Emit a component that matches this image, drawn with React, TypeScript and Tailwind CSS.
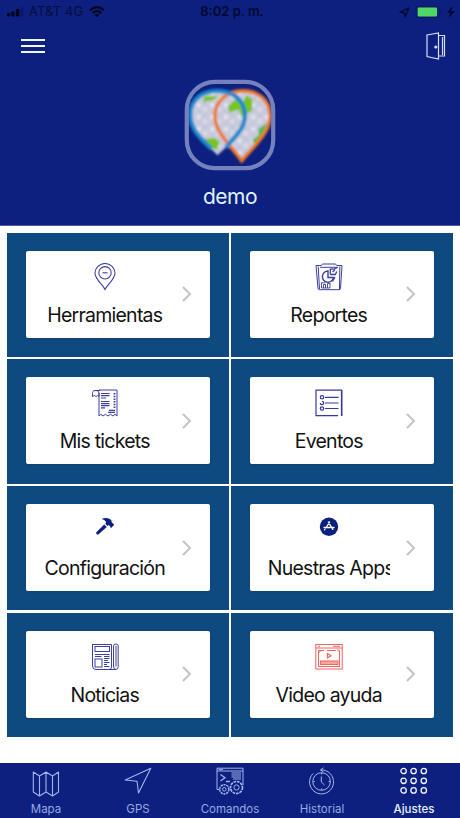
import type { ReactNode } from "react"
import clsx from "clsx"

const PinIcon = () => (
  <svg width="28" height="28" viewBox="0 0 28 28" fill="none" stroke="#3b3f9e" strokeWidth="1.1">
    <path d="M14 26.5 C11.5 21 4 16.5 4 10 A10 9.5 0 0 1 24 10 C24 16.5 16.5 21 14 26.5 Z" />
    <circle cx="14" cy="9.8" r="6.2" />
    <path d="M11.5 9.8h5" />
  </svg>
)

const ReportIcon = () => (
  <svg width="28" height="28" viewBox="0 0 28 28" fill="none" stroke="#3b3f9e" strokeWidth="1">
    <path d="M1 2.5 L3 25.5 Q3.2 26.7 4.5 26.7 H24 Q25.4 26.7 25.5 25.5 L27 2.5" />
    <path d="M1 2.5 H6 M22 2.5 H27 M3.2 3.5 L4.5 26 M24.8 3.5 L24.5 26 M6 2.8 L7.5 1 H20.5 L22 2.8 M5 4.3 H23" />
    <path d="M13 8 A5.6 5.6 0 1 0 18.5 14.5 H13 Z" strokeWidth="1.4" />
    <path d="M15.3 11.5 V6.2 H19 L22.5 4.5 M15.3 11.5 H20.3 L21.8 8.5 M17.5 9 L20 7 M20 14 L17.5 18.5" strokeWidth="1.3" />
    <path d="M6.5 20 V25 H15 V20 M8.5 25 V21.5 H10.5 V25 M12.5 25 V20.5 H15 M6 19.8 H10.5" strokeWidth="0.9" />
  </svg>
)

const TicketIcon = () => (
  <svg width="28" height="28" viewBox="0 0 28 28" fill="none" stroke="#3b3f9e" strokeWidth="1">
    <path d="M8 1 H26 V27 L24 25.3 L22 27 L19.5 25.3 L17 27 L14.5 25.3 L12 27 L9.8 25.3 L8 27 V4" />
    <path d="M9 1.5 H4 C2 1.5 1.5 3 1.5 4.5 V7.5 L3.5 6.5 L5 7.5 L6.5 6.5 L8 7.5 V4 C8 2 6 1.5 4 1.5" />
    <path d="M10 4.5 H18.5 M10 6.7 H18.5 M10 9 H15 M10 12.5 H18.5 M10 14.6 H18.5 M10 16.7 H18.5 M10 18.8 H14 M18 21.3 H24 M17 23.3 H24" strokeWidth="1.2" />
    <path d="M23.5 4 V19" strokeWidth="1.8" strokeDasharray="1.5 1.2" />
  </svg>
)

const EventIcon = () => (
  <svg width="28" height="28" viewBox="0 0 28 28" fill="none" stroke="#3539a0" strokeWidth="1.2">
    <path d="M23 26.6 H1 V1.2 H27" />
    <path d="M26.7 1 V27" strokeWidth="1.6" />
    <path d="M10 8.3 H23.5 M10 14 H23.5 M10 19.5 H23.5" />
    <circle cx="7" cy="8.3" r="1.7" />
    <path d="M7 12.3 A1.7 1.7 0 1 1 5.3 14" />
    <circle cx="7" cy="19.5" r="1.7" />
  </svg>
)

const HammerIcon = () => (
  <svg width="28" height="28" viewBox="0 0 28 28" fill="#0c2080">
    <g transform="translate(0 1.7)">
      <path d="M10.5 1.2 C14 -0.4 18 0 20.2 2.4 L20.8 4.6 L22 6 L22.6 5.8 L23 7.2 L20.4 10 L19.2 9.8 L19.2 8.6 L17.6 7.4 L16.6 8.2 L14.2 6 L15.2 4.8 C14.6 2.8 13 1.6 10.5 1.2 Z" />
      <path d="M13.2 6.8 L15.8 9.2 L7.6 16.6 C6.4 17.6 4.4 15.8 5.4 14.5 Z" />
    </g>
  </svg>
)

const AppStoreIcon = () => (
  <svg width="28" height="28" viewBox="0 0 28 28" fill="none" stroke="#fff" strokeWidth="1.3" strokeLinecap="round">
    <circle cx="14" cy="10.8" r="9.2" fill="#0c2080" stroke="none" />
    <path d="M13.3 6 L17.8 13.4 M14.7 6 L10.8 12 M9.8 13.4 L9.5 13.8 M9 11.5 H15.2 M17.4 11.5 H19" />
  </svg>
)

const NewsIcon = () => (
  <svg width="28" height="28" viewBox="0 0 28 28" fill="none" stroke="#3b3f9e" strokeWidth="1">
    <path d="M1.5 1 V23 Q1.5 26.5 5 26.5 H24.5 Q27.2 26.5 27.2 23.5 V3 Q27 1 25 1 Q22.5 1 22.5 3 V23 Q22.5 26.5 25 26.5" />
    <path d="M1 1.5 H20.5 V24 Q20.5 26.5 18 26.5 M25 3 V23.5" />
    <rect x="4" y="3.5" width="14.5" height="5" />
    <path d="M4 11.5 H18.5 M4 13.5 H10.5 M13 13.5 H18.5 M13 15.5 H18.5 M13 17.5 H17 M13 19.5 H18.5 M13 21.5 H16 M13 23.5 H18.5" />
    <rect x="4" y="16" width="7" height="8" />
  </svg>
)

const VideoIcon = () => (
  <svg width="28" height="28" viewBox="0 0 28 28" fill="none" stroke="#f0625f" strokeWidth="1">
    <rect x="0.8" y="1.5" width="26.4" height="24.5" />
    <path d="M1 5 H27 M3 3.3 H5 M18 3.3 H25" />
    <path d="M3.5 23.5 V7.5 H9 M12 7.5 H21 M24.5 7.5 V23.5 M3.5 10 L6 7.5 M23 6 V8.5" />
    <path d="M12.5 10.5 L16 12.8 L12.5 15 Z" strokeWidth="1.2" />
    <rect x="5.5" y="18" width="17.5" height="3.5" fill="#f8a5a2" />
    <path d="M3.5 23.5 H25" />
  </svg>
)

const MapIcon = () => (
  <svg className="overflow-visible" width="28" height="28" viewBox="0 0 28 28" fill="none" stroke="#a3b4ea" strokeWidth="1.1" strokeLinejoin="round">
    <path d="M1.3 5 L7.5 9 L14 5 L20.5 9 L26.5 5 V25 L20.5 29 L14 25 L7.5 29 L1.3 25 Z M7.5 9 V29 M14 5 V25 M20.5 9 V29" />
  </svg>
)

const GpsIcon = () => (
  <svg width="28" height="28" viewBox="0 0 28 28" fill="none" stroke="#a3b4ea" strokeWidth="1.1" strokeLinejoin="round">
    <path d="M26.8 1.2 L1.2 13 L13 14.2 L14.5 26 Z" />
  </svg>
)

const CommandIcon = () => (
  <svg className="overflow-visible" width="28" height="28" viewBox="0 0 28 28" fill="none" stroke="#a3b4ea" strokeWidth="1">
    <path d="M3.5 22.5 H1 V1.2 H27 V18 M1 4 H27 M2.5 2.6 H7" />
    <path d="M4.5 7.5 L9 10.7 L4.5 14 M10 14.5 H14" strokeWidth="1.3" />
    <path d="M15.5 6 H25 M15.5 8 H25 M15.5 10 H25 M17 12 H25" />
    <circle cx="8.3" cy="22.3" r="4.6" strokeWidth="1.5" strokeDasharray="2.2 .7" />
    <circle cx="8.3" cy="22.3" r="1.8" />
    <circle cx="20.5" cy="20.5" r="6" strokeWidth="1.7" strokeDasharray="2.7 .8" />
    <circle cx="20.5" cy="20.5" r="2.6" />
  </svg>
)

const HistoryIcon = () => (
  <svg width="28" height="28" viewBox="0 0 28 28" fill="none" stroke="#a3b4ea" strokeWidth="1">
    <path d="M12.5 3 H15 A12 12 0 1 1 5 6.5 M15.5 0.8 L12.5 3 L15.5 5" />
    <circle cx="13.6" cy="14.5" r="8.8" />
    <path d="M13.3 9.5 V15 L16.5 18 M13.6 6 V7.5 M13.6 21.5 V23 M5.2 14.5 H6.7 M20.6 14.5 H22.1" />
  </svg>
)

const GridIcon = () => (
  <svg width="28" height="28" viewBox="0 0 28 28" fill="none" stroke="#f4f7ff" strokeWidth="1.3">
    {[4, 13.8, 23.4].map((cy) =>
      [3.6, 13.6, 23.8].map((cx) => <circle key={`${cx}-${cy}`} cx={cx} cy={cy} r="2.7" />)
    )}
  </svg>
)

const tiles: { label: string; icon: ReactNode }[] = [
  { label: "Herramientas", icon: <PinIcon /> },
  { label: "Reportes", icon: <ReportIcon /> },
  { label: "Mis tickets", icon: <TicketIcon /> },
  { label: "Eventos", icon: <EventIcon /> },
  { label: "Configuración", icon: <HammerIcon /> },
  { label: "Nuestras Apps", icon: <AppStoreIcon /> },
  { label: "Noticias", icon: <NewsIcon /> },
  { label: "Video ayuda", icon: <VideoIcon /> },
]

const tabs: { label: string; icon: ReactNode; active?: boolean }[] = [
  { label: "Mapa", icon: <MapIcon /> },
  { label: "GPS", icon: <GpsIcon /> },
  { label: "Comandos", icon: <CommandIcon /> },
  { label: "Historial", icon: <HistoryIcon /> },
  { label: "Ajustes", icon: <GridIcon />, active: true },
]

function StatusBar() {
  return (
    <div className="grid h-6 grid-cols-3 items-center px-[7px] text-[13px] text-[#060d3c]">
      <div className="flex items-center">
        <svg className="shrink-0" width="17" height="10" viewBox="0 0 17 10" fill="#02061f">
          <rect x="0" y="6" width="3.2" height="3.5" rx=".7" />
          <rect x="4.3" y="4.5" width="3.2" height="5" rx=".7" />
          <rect x="8.8" y="2" width="3.6" height="7.5" rx=".7" />
          <rect x="13.5" y="0" width="3" height="9.5" rx=".7" fill="#0b1a66" />
        </svg>
        <span className="ml-[5px] whitespace-nowrap tracking-[0.1px]">AT&amp;T 4G</span>
        <svg className="ml-1.5 shrink-0" width="16" height="12" viewBox="0 0 16 12" fill="none" stroke="#02061f" strokeWidth="2.1">
          <path d="M1 4.2 Q8 -2 15 4.2 M3.6 7 Q8 3.2 12.4 7" />
          <path d="M5.6 8.7 Q8 7 10.4 8.7 L8 11.2 Z" fill="#02061f" stroke="none" />
        </svg>
      </div>
      <span className="pl-1 text-center font-semibold text-[#03092c]">8:02 p. m.</span>
      <div className="-mr-[7px] flex items-center justify-end">
        <svg width="11" height="11" viewBox="0 0 11 11" fill="none" stroke="#03092c" strokeWidth="1.3" strokeLinejoin="round">
          <path d="M10 1 L1 5 L5.3 5.7 L6 10 Z" />
        </svg>
        <svg className="ml-1.5" width="27" height="12" viewBox="0 0 27 12">
          <rect x=".5" y=".5" width="23" height="11" rx="3" fill="none" stroke="#0a1c5c" />
          <rect x="1.7" y="1.5" width="19.3" height="9" rx="1" fill="#4fd964" />
          <path d="M25 4 V8" stroke="#0a1c5c" strokeWidth="1.5" />
        </svg>
        <svg className="mr-[5px] ml-1" width="8" height="12" viewBox="0 0 8 12" fill="#03092c">
          <path d="M5.5 0 L0 6.7 H3.3 L2 12 L7.8 5 H4.4 Z" />
        </svg>
      </div>
    </div>
  )
}

function Avatar() {
  return (
    <svg width="92" height="92" viewBox="0 0 92 92">
      <defs>
        <filter id="soften">
          <feGaussianBlur stdDeviation="0.9" />
        </filter>
        <pattern id="speckle" width="13" height="11" patternUnits="userSpaceOnUse">
          <rect width="13" height="11" fill="#c9cbdd" />
          <circle cx="3" cy="3" r="2" fill="#e4e5ef" />
          <circle cx="9" cy="7" r="2.2" fill="#d9dbe8" />
          <circle cx="9" cy="1.5" r="1.3" fill="#bbbed8" />
          <circle cx="3" cy="8.5" r="1.2" fill="#bec1da" />
        </pattern>
      </defs>
      <g filter="url(#soften)" transform="translate(-2.1 -1.2) scale(1.05 1.09)">
        <path d="M34 12 C19 12 8 21 8 35 C8 49 22 59 34 71 C47 59 59 49 60 35 C60 21 49 12 34 12 Z" fill="url(#speckle)" />
        <path d="M17 57 L31 55 L36 59 L33 66 L26 64 Z" fill="#78c51c" />
        <path d="M21 17 L36 17 L28 21 L20 22 Z" fill="#78c51c" />
        <path d="M58 12 C43 12 32 21 32 35 C32 51 46 62 57 77 C69 63 84 51 84 35 C84 21 73 12 58 12 Z" fill="url(#speckle)" />
        <path d="M44 26 L52 19 L58 23 L61 16 L67 19 L67 30 L57 36 L54 29 L45 32 Z" fill="#78c51c" />
        <path d="M82 41 L73 47 L73 53 L67 57 L69 61 L75 55 Z" fill="#4cb84b" />
        <path d="M57 76 C45 60 31 50 31.5 34 C32 21 43 12 58 12 C73 12 84 21 84 35 C84 50 69 62 57 76 Z" fill="none" stroke="#ee7927" strokeWidth="3.4" />
        <path d="M28 65 C17 55 8 47 8 34 C8 20 19 12 34 12 C49 12 60 21 60 35 C60 47 49 55 42 64" fill="none" stroke="#1687cd" strokeWidth="4" />
      </g>
      <rect x="2.8" y="2.8" width="86.4" height="86.4" rx="28" fill="none" stroke="#7581bd" strokeWidth="4.2" />
    </svg>
  )
}

function Header() {
  return (
    <header className="h-[226px] border-b border-[#5058a8] bg-[#0d2080]">
      <StatusBar />
      <div className="flex h-11 items-center justify-between pr-[14px] pl-[21px]">
        <button aria-label="Menú" className="flex w-6 flex-col gap-[4px]">
          <span className="h-[2px] bg-[#eef6ff]" />
          <span className="h-[2px] bg-[#eef6ff]" />
          <span className="h-[2px] bg-[#eef6ff]" />
        </button>
        <svg width="20" height="28" viewBox="0 0 20 28" fill="none" stroke="#d5def8" strokeWidth="1.2">
          <path d="M1 3 L12.5 1 V27 L1 24.5 Z" />
          <path d="M13 3.5 H18.5 V24 H13 M16.5 5 V23" />
          <circle cx="9.8" cy="15" r="1" fill="#fff" />
        </svg>
      </div>
      <div className="mt-[11px] flex flex-col items-center">
        <Avatar />
        <p className="mt-[10px] text-[21px] leading-8 tracking-[-0.5px] text-[#dff3ff]">demo</p>
      </div>
    </header>
  )
}

function Tile({ label, icon }: { label: string; icon: ReactNode }) {
  return (
    <div className="flex items-center justify-center bg-[#0e4a80]">
      <button className="mb-px flex h-[87px] w-[184.5px] items-center rounded-[2px] bg-white pr-[18px] pl-[18px] shadow-sm">
        <span className="flex h-full w-[122px] flex-col items-center overflow-hidden pt-3">
          <span className="h-7">{icon}</span>
          <span className="mt-[10px] w-full text-center text-[19.5px] leading-[29px] tracking-[-0.75px] whitespace-nowrap text-[#111]">
            {label}
          </span>
        </span>
        <svg className="ml-auto" width="10" height="16" viewBox="0 0 10 16" fill="none" stroke="#c4c4c6" strokeWidth="2">
          <path d="M1 1 L8 8 L1 15" />
        </svg>
      </button>
    </div>
  )
}

export default function App() {
  return (
    <div className="flex h-[818px] w-[460px] flex-col overflow-hidden bg-white font-['Inter',sans-serif]">
      <Header />
      <main className="flex-1 px-[7px] pt-[6.5px]">
        <div className="grid h-[504.5px] grid-cols-2 grid-rows-4 gap-x-[2px] gap-y-[2.4px]">
          {tiles.map((tile) => (
            <Tile key={tile.label} {...tile} />
          ))}
        </div>
      </main>
      <nav className="grid h-[55px] grid-cols-5 bg-[#0d2080]">
        {tabs.map((tab) => (
          <button
            key={tab.label}
            className={clsx(
              "flex flex-col items-center pt-1 text-[11.5px]",
              tab.active ? "font-medium text-[#e6f0ff]" : "text-[#96a9e0]"
            )}
          >
            {tab.icon}
            <span className="mt-[6px] leading-4">{tab.label}</span>
          </button>
        ))}
      </nav>
    </div>
  )
}
